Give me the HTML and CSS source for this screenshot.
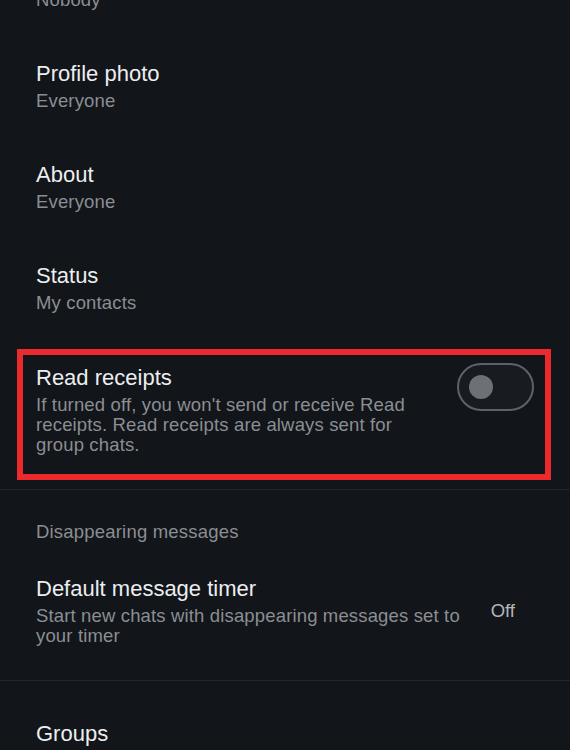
FILE: index.html
```html
<!DOCTYPE html>
<html>
<head>
<meta charset="utf-8">
<link rel="stylesheet" href="styles.css">
</head>
<body>
<div class="screen">
  <div class="row row-first">
    <div class="sub">Nobody</div>
  </div>
  <div class="row">
    <div class="title">Profile photo</div>
    <div class="sub">Everyone</div>
  </div>
  <div class="row">
    <div class="title">About</div>
    <div class="sub">Everyone</div>
  </div>
  <div class="row">
    <div class="title">Status</div>
    <div class="sub">My contacts</div>
  </div>
  <div class="highlight">
    <div class="receipts-text">
      <div class="title">Read receipts</div>
      <div class="desc">If turned off, you won't send or receive Read receipts. Read receipts are always sent for group chats.</div>
    </div>
    <div class="toggle"><span class="knob"></span></div>
  </div>
  <div class="divider"></div>
  <div class="section-head">Disappearing messages</div>
  <div class="timer-row">
    <div class="timer-text">
      <div class="title">Default message timer</div>
      <div class="desc desc-timer">Start new chats with disappearing messages set to your timer</div>
    </div>
    <div class="value">Off</div>
  </div>
  <div class="divider"></div>
  <div class="groups">
    <div class="title">Groups</div>
  </div>
</div>
</body>
</html>
```

FILE: styles.css
```css
html, body {
  margin: 0;
  padding: 0;
  background: #121519;
}
body {
  font-family: "Liberation Sans", Arial, sans-serif;
  width: 570px;
  height: 750px;
  overflow: hidden;
}
.screen {
  display: flex;
  flex-direction: column;
}
.row {
  padding: 25px 36px;
  display: flex;
  flex-direction: column;
  gap: 3px;
}
.row-first {
  margin-top: -11px;
  padding-top: 0;
}
.title {
  color: #eceef0;
  font-size: 22px;
  line-height: 26px;
}
.sub {
  color: #8b8e93;
  font-size: 18.5px;
  line-height: 22px;
  letter-spacing: 0.15px;
}
.highlight {
  margin: 10px 19px 0 17px;
  border: 6px solid #ec2a2e;
  padding: 8px 11px 19px 13px;
  display: flex;
  align-items: flex-start;
  gap: 26px;
}
.receipts-text {
  flex: 1;
  padding-top: 2px;
  display: flex;
  flex-direction: column;
  gap: 4px;
}
.desc {
  color: #8b8e93;
  font-size: 18.5px;
  line-height: 20px;
  letter-spacing: 0.15px;
}
.toggle {
  height: 44px;
  border: 2px solid #5e6268;
  border-radius: 26px;
  background: #181b20;
  display: flex;
  align-items: center;
  padding-left: 10px;
  box-sizing: content-box;
  width: 63px;
  flex: none;
}
.knob {
  width: 24px;
  height: 24px;
  border-radius: 50%;
  background: #6c7077;
}
.divider {
  height: 1px;
  background: #23272c;
  margin-top: 9px;
}
.section-head {
  padding: 31px 36px 0;
  color: #8b8e93;
  font-size: 18.5px;
  line-height: 22px;
  letter-spacing: 0.2px;
}
.timer-row {
  padding: 33px 55px 0 36px;
  display: flex;
  align-items: center;
  gap: 20px;
  margin-bottom: 26px;
}
.timer-text {
  flex: 1;
  display: flex;
  flex-direction: column;
  gap: 4px;
}
.desc-timer {
  line-height: 19.5px;
}
.value {
  color: #b3b6ba;
  font-size: 18.5px;
  line-height: 22px;
}
.groups {
  padding: 40px 36px 0;
}
```
